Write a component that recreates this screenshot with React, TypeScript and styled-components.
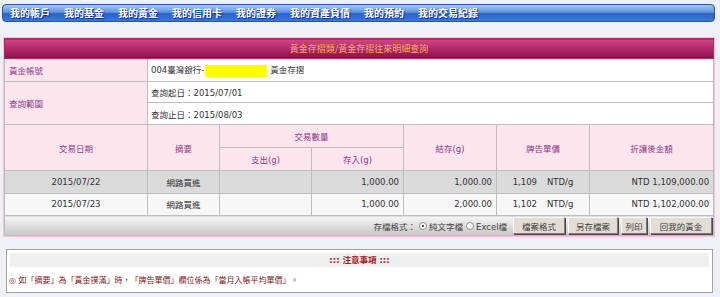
import React from 'react';
import styled, { createGlobalStyle } from 'styled-components';

const GlobalStyle = createGlobalStyle`
  html, body {
    margin: 0;
    padding: 0;
    background: #eef0f5;
  }
  body {
    font-family: "DejaVu Sans", "Noto Sans CJK TC", sans-serif;
    font-size: 8.5px;
    color: #333;
  }
`;

const Page = styled.div`
  width: 720px;
  height: 297px;
  padding-top: 4px;
  box-sizing: border-box;
  overflow: hidden;
`;

const NavBar = styled.nav`
  display: flex;
  align-items: center;
  gap: 14px;
  height: 18px;
  margin: 0 5px 0 2px;
  padding-left: 7px;
  box-sizing: border-box;
  border: 1px solid #2c52a0;
  border-radius: 4px;
  background: linear-gradient(#a3c8f5, #5f93dd 46%, #2a62c4 54%, #3c7ad8);
`;

const NavItem = styled.a`
  color: #fff;
  font-family: "Noto Sans CJK TC", sans-serif;
  font-size: 10px;
  font-weight: 700;
  line-height: 1;
  text-decoration: none;
  text-shadow: 1px 1px 1px #0e2e74;
  white-space: nowrap;
`;

const Table = styled.table`
  width: 709px;
  margin: 16px 0 0 4px;
  border-collapse: collapse;
  table-layout: fixed;
  outline: 1px solid #f6c3d6;
`;

const Row = styled.tr<{ $h: number }>`
  height: ${({ $h }) => $h}px;
`;

const TitleCell = styled.th`
  padding: 0;
  border: 1px solid #b02a62;
  background: linear-gradient(#cf4a86, #b4296a 45%, #8c0f47);
  color: #f7b25c;
  font-family: "Noto Sans CJK TC", sans-serif;
  font-size: 9px;
  font-weight: 400;
  text-align: center;
`;

const LabelCell = styled.td`
  padding: 0 0 0 4px;
  border: 1px solid #bdbdbd;
  background: #fde5ee;
  color: #8a3c8c;
  vertical-align: middle;
`;

const ValueCell = styled.td`
  padding: 0 0 0 3px;
  border: 1px solid #bdbdbd;
  background: #fff;
  color: #333;
  white-space: nowrap;
`;

const Masked = styled.span`
  display: inline-block;
  width: 62px;
  height: 12px;
  margin: 0 3px 0 1px;
  vertical-align: middle;
  background: #ffff00;
`;

const HeadCell = styled.th`
  padding: 0;
  border: 1px solid #bdbdbd;
  background: #fde5ee;
  color: #8a3c8c;
  font-weight: 400;
  text-align: center;
  vertical-align: middle;
`;

const DataRow = styled.tr<{ $shade: boolean }>`
  height: 22.5px;
  background: ${({ $shade }) => ($shade ? '#dadada' : '#f7f7f7')};
`;

const DataCell = styled.td<{ $align?: 'left' | 'center' | 'right' }>`
  padding: 0 4px;
  border: 1px solid #bdbdbd;
  color: #333;
  text-align: ${({ $align }) => $align || 'center'};
  white-space: nowrap;
`;

const Unit = styled.span`
  margin-left: 10px;
`;

const FooterCell = styled.td`
  padding: 0;
  border: 1px solid #bdbdbd;
  background: linear-gradient(#f6f6f6, #d9d9d9 60%, #c6c6c6);
`;

const Toolbar = styled.div`
  display: flex;
  align-items: center;
  justify-content: flex-end;
  height: 19px;
`;

const FormatLabel = styled.span`
  margin-right: 3px;
  color: #444;
`;

const RadioOption = styled.label`
  display: flex;
  align-items: center;
  gap: 2px;
  margin-right: 3px;
  color: #444;
`;

const RadioDot = styled.span<{ $checked?: boolean }>`
  position: relative;
  width: 8px;
  height: 8px;
  border-radius: 50%;
  border: 1px solid #8a8a8a;
  background: #fff;
  box-sizing: border-box;
  &::after {
    content: '';
    display: ${({ $checked }) => ($checked ? 'block' : 'none')};
    position: absolute;
    left: 2px;
    top: 2px;
    width: 2px;
    height: 2px;
    border-radius: 50%;
    background: #222;
  }
`;

const Button = styled.button<{ $w: number }>`
  width: ${({ $w }) => $w}px;
  height: 17px;
  margin-left: 3px;
  padding: 0;
  border: 1px solid;
  border-color: #fbfbfb #7b7b7b #7b7b7b #fbfbfb;
  background: #e2ded6;
  color: #3a3a3a;
  font-family: "Noto Sans CJK TC", sans-serif;
  font-size: 8.5px;
  box-shadow: 1px 1px 0 #4a4a4a;
  &:last-child {
    margin-right: 1px;
  }
`;

const NoteBox = styled.section`
  width: 707px;
  height: 44px;
  margin: 13px 0 0 6px;
  padding: 3px 3px 0 3px;
  box-sizing: border-box;
  border: 1px solid #a2a2a2;
  background: #fff;
`;

const NoteTitle = styled.div`
  height: 14px;
  line-height: 14px;
  background: #efefef;
  color: #a3191d;
  font-weight: 700;
  text-align: center;
`;

const NoteText = styled.p`
  margin: 7px 0 0 -1px;
  color: #7d1717;
  font-size: 8px;
`;

const navItems = [
  '我的帳戶',
  '我的基金',
  '我的黃金',
  '我的信用卡',
  '我的證券',
  '我的資產負債',
  '我的預約',
  '我的交易紀錄',
];

const rows = [
  { date: '2015/07/22', memo: '網路買進', out: '', in: '1,000.00', bal: '1,000.00', price: '1,109', amt: 'NTD 1,109,000.00' },
  { date: '2015/07/23', memo: '網路買進', out: '', in: '1,000.00', bal: '2,000.00', price: '1,102', amt: 'NTD 1,102,000.00' },
];

export default function App() {
  return (
    <Page>
      <GlobalStyle />
      <NavBar>
        {navItems.map((item) => (
          <NavItem key={item}>{item}</NavItem>
        ))}
      </NavBar>

      <Table>
        <colgroup>
          <col style={{ width: 143 }} />
          <col style={{ width: 72 }} />
          <col style={{ width: 92 }} />
          <col style={{ width: 92 }} />
          <col style={{ width: 93 }} />
          <col style={{ width: 93 }} />
          <col style={{ width: 124 }} />
        </colgroup>
        <tbody>
          <Row $h={20}>
            <TitleCell colSpan={7}>黃金存摺類/黃金存摺往來明細查詢</TitleCell>
          </Row>
          <Row $h={23}>
            <LabelCell>黃金帳號</LabelCell>
            <ValueCell colSpan={6}>
              004臺灣銀行-<Masked />黃金存摺
            </ValueCell>
          </Row>
          <Row $h={21}>
            <LabelCell rowSpan={2}>查詢範圍</LabelCell>
            <ValueCell colSpan={6}>查詢起日：2015/07/01</ValueCell>
          </Row>
          <Row $h={22}>
            <ValueCell colSpan={6}>查詢止日：2015/08/03</ValueCell>
          </Row>
          <Row $h={23}>
            <HeadCell rowSpan={2}>交易日期</HeadCell>
            <HeadCell rowSpan={2}>摘要</HeadCell>
            <HeadCell colSpan={2}>交易數量</HeadCell>
            <HeadCell rowSpan={2}>結存(g)</HeadCell>
            <HeadCell rowSpan={2}>牌告單價</HeadCell>
            <HeadCell rowSpan={2}>折讓後金額</HeadCell>
          </Row>
          <Row $h={23}>
            <HeadCell>支出(g)</HeadCell>
            <HeadCell>存入(g)</HeadCell>
          </Row>
          {rows.map((r, i) => (
            <DataRow key={r.date} $shade={i === 0}>
              <DataCell>{r.date}</DataCell>
              <DataCell>{r.memo}</DataCell>
              <DataCell $align="right">{r.out}</DataCell>
              <DataCell $align="right">{r.in}</DataCell>
              <DataCell $align="right">{r.bal}</DataCell>
              <DataCell>
                {r.price}
                <Unit>NTD/g</Unit>
              </DataCell>
              <DataCell $align="right">{r.amt}</DataCell>
            </DataRow>
          ))}
          <Row $h={20}>
            <FooterCell colSpan={7}>
              <Toolbar>
                <FormatLabel>存檔格式：</FormatLabel>
                <RadioOption>
                  <RadioDot $checked />
                  純文字檔
                </RadioOption>
                <RadioOption>
                  <RadioDot />
                  Excel檔
                </RadioOption>
                <Button $w={52}>檔案格式</Button>
                <Button $w={50}>另存檔案</Button>
                <Button $w={26}>列印</Button>
                <Button $w={62}>回我的黃金</Button>
              </Toolbar>
            </FooterCell>
          </Row>
        </tbody>
      </Table>

      <NoteBox>
        <NoteTitle>::: 注意事項 :::</NoteTitle>
        <NoteText>◎ 如「摘要」為「黃金撲滿」時，「牌告單價」欄位係為「當月入帳平均單價」。</NoteText>
      </NoteBox>
    </Page>
  );
}
